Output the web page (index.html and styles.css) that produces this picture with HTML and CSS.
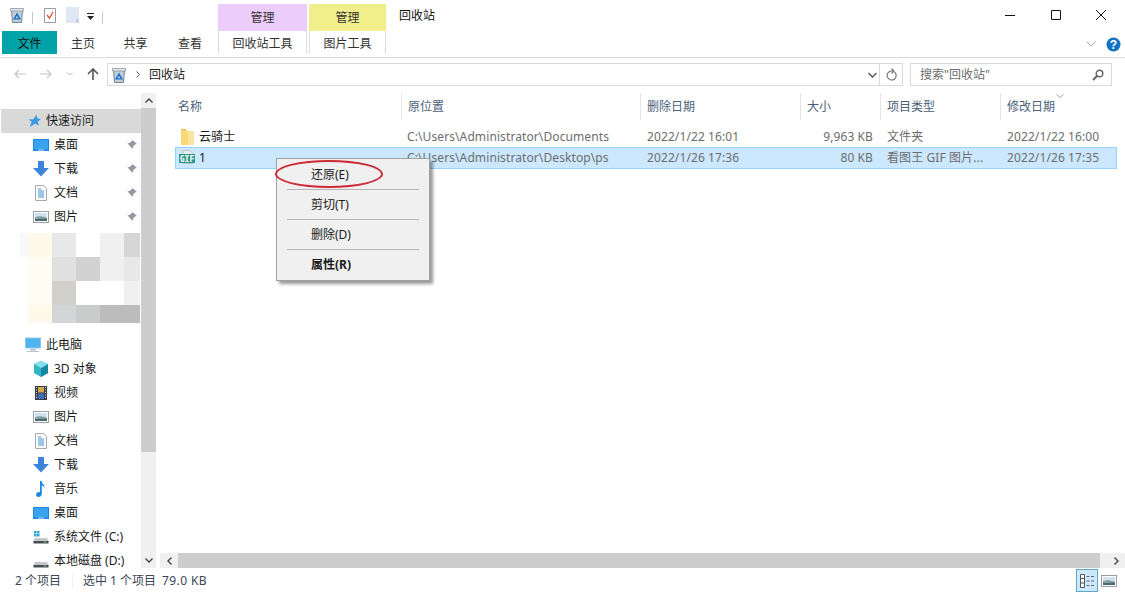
FILE: index.html
```html
<!DOCTYPE html>
<html lang="zh-CN">
<head>
  <meta charset="UTF-8">
  <title>回收站</title>
  <link rel="stylesheet" href="styles.css">
</head>
<body>
  <svg class="defs" width="0" height="0">
    <symbol id="bin" viewBox="0 0 16 16">
      <path d="M2.500 3h11l-1 12.500h-9z" fill="#c3ced9" stroke="#76828f"/>
      <path d="M1.500 1.500h13V4h-13z" fill="#e4e9ef" stroke="#8a95a2" stroke-width=".8"/>
      <path fill-rule="evenodd" d="M8 5.500l4 7H4zM8 8.700l-1.600 2.600h3.200z" fill="#1573cc"/>
    </symbol>
    <symbol id="desk" viewBox="0 0 16 16">
      <rect x="0" y="2" width="16" height="12" fill="#1a86de"/>
      <rect x="1" y="3" width="14" height="9.500" fill="#38a4f0"/>
      <rect x="5" y="12.500" width="6" height="1" fill="#bfe3fb"/>
    </symbol>
    <symbol id="down" viewBox="0 0 16 16">
      <path d="M5 0h6v7h5l-8 8.500L0 7h5z" fill="#3c86d8"/>
    </symbol>
    <symbol id="doc" viewBox="0 0 16 16">
      <path d="M2.500 .5h8l3 3v12h-11z" fill="#fff" stroke="#a3a9b0"/>
      <path d="M5 4h3M5 6h6M5 8h6M5 10h6M5 12h6" stroke="#3d8fd1" fill="none"/>
    </symbol>
    <symbol id="pic" viewBox="0 0 16 16">
      <rect x="0.500" y="2.500" width="15" height="11" fill="#fff" stroke="#9a9fa5"/>
      <rect x="2" y="4" width="12" height="4" fill="#cfe0ee"/>
      <path d="M2 8l5-1 7 1.500V12H2z" fill="#8aa3a8"/>
      <path d="M2 10l12-.5V12H2z" fill="#4a6a72"/>
    </symbol>
    <symbol id="pin" viewBox="0 0 12 12">
      <path d="M6.500 1l4.500 4-2 .6-2 2.200-.2 2.200L4 7.300 1 11l3-4-2.700-2.800L3.600 4l2.200-1.800z" fill="#8f979f"/>
    </symbol>
  </svg>

  <header class="titlebar">
    <div class="qat">
      <svg class="icon" width="16" height="16"><use href="#bin"/></svg>
      <span class="qat-sep"></span>
      <svg class="icon" width="16" height="17" viewBox="0 0 16 17"><path d="M2.500 1.500h11v14h-11z" fill="#fff" stroke="#9a9a9a"/><path d="M5 8l2.500 3L11 5" stroke="#e2542a" stroke-width="1.300" fill="none"/></svg>
      <svg class="icon qat-page" width="14" height="16" viewBox="0 0 14 16"><path d="M0 0h13v16H0z" fill="#dfe7f3"/><path d="M10 12h3v4h-3z" fill="#c3cddb"/></svg>
      <svg class="icon qat-drop" width="7" height="8" viewBox="0 0 7 8"><path d="M0 0h7v1H0zM0 3h7L3.500 7z" fill="#222"/></svg>
      <span class="qat-sep last"></span>
    </div>
    <div class="ctx-head purple">管理</div>
    <div class="ctx-head yellow">管理</div>
    <div class="win-title">回收站</div>
    <div class="win-btns">
      <svg width="10" height="10" viewBox="0 0 10 10"><path d="M0 5.500h10" stroke="#111"/></svg>
      <svg width="10" height="10" viewBox="0 0 10 10"><path d="M.5.500h9v9h-9z" fill="none" stroke="#111"/></svg>
      <svg width="10" height="10" viewBox="0 0 10 10"><path d="M0 0l10 10M10 0L0 10" stroke="#111"/></svg>
    </div>
  </header>

  <div class="ribbon">
    <div class="tab file">文件</div>
    <div class="tab home">主页</div>
    <div class="tab share">共享</div>
    <div class="tab view">查看</div>
    <div class="tab tool t-bin">回收站工具</div>
    <div class="tab tool t-pic">图片工具</div>
    <div class="ribbon-right">
      <svg width="10" height="6" viewBox="0 0 10 6"><path d="M.5.500L5 5 9.500.500" fill="none" stroke="#a9a9a9"/></svg>
      <svg class="help" width="15" height="15" viewBox="0 0 15 15"><circle cx="7.500" cy="7.500" r="7" fill="#1573c4"/><text x="7.500" y="11.500" text-anchor="middle" class="help-q">?</text></svg>
    </div>
  </div>

  <div class="addr-row">
    <div class="nav-btns">
      <svg width="12" height="10" viewBox="0 0 12 10"><path d="M12 5H1M5 1L1 5l4 4" fill="none" stroke="#c4c4c4" stroke-width="1.200"/></svg>
      <svg width="12" height="10" viewBox="0 0 12 10"><path d="M0 5h11M7 1l4 4-4 4" fill="none" stroke="#c4c4c4" stroke-width="1.200"/></svg>
      <svg width="6" height="4" viewBox="0 0 6 4"><path d="M.5.500L3 3 5.500.500" fill="none" stroke="#c4c4c4"/></svg>
      <svg width="12" height="12" viewBox="0 0 12 12"><path d="M6 12V1.500M1 6l5-5 5 5" fill="none" stroke="#555" stroke-width="1.600"/></svg>
    </div>
    <div class="addr-box">
      <svg class="icon" width="16" height="16"><use href="#bin"/></svg>
      <svg class="crumb" width="4" height="7" viewBox="0 0 4 7"><path d="M.5.500l3 3-3 3" fill="none" stroke="#555"/></svg>
      <span class="crumb-text">回收站</span>
      <svg class="addr-drop" width="9" height="6" viewBox="0 0 9 6"><path d="M.5 1L4.500 5l4-4" fill="none" stroke="#555" stroke-width="1.400"/></svg>
      <span class="refresh">
        <svg width="11" height="13" viewBox="0 0 11 13"><path d="M8.500 4A4.500 4.500 0 1 1 5.500 3H7M5.500.500L8 3 5.500 5.500" fill="none" stroke="#777" stroke-width="1.200"/></svg>
      </span>
    </div>
    <div class="search-box">
      <span>搜索"回收站"</span>
      <svg width="12" height="12" viewBox="0 0 12 12"><circle cx="7.500" cy="4.500" r="3.300" fill="none" stroke="#666" stroke-width="1.400"/><path d="M5 7l-4 4" stroke="#666" stroke-width="2"/></svg>
    </div>
  </div>

  <div class="main">
    <aside class="sidebar">
      <div class="nav-tree">
        <div class="nav-item top active">
          <svg class="star" width="13" height="14" viewBox="0 0 14 14"><path d="M9 0l1 4.300 4 .5-3.400 2.700.9 5L8 9.600 2 13.500l2-6L.5 5.500 6 5z" fill="#3a98e0"/></svg>
          <span>快速访问</span>
        </div>
        <div class="nav-item"><svg width="16" height="16"><use href="#desk"/></svg><span>桌面</span><svg class="pin" width="12" height="12"><use href="#pin"/></svg></div>
        <div class="nav-item"><svg width="16" height="16"><use href="#down"/></svg><span>下载</span><svg class="pin" width="12" height="12"><use href="#pin"/></svg></div>
        <div class="nav-item"><svg width="16" height="16"><use href="#doc"/></svg><span>文档</span><svg class="pin" width="12" height="12"><use href="#pin"/></svg></div>
        <div class="nav-item"><svg width="16" height="16"><use href="#pic"/></svg><span>图片</span><svg class="pin" width="12" height="12"><use href="#pin"/></svg></div>

        <div class="blur-block">
          <i class="b1"></i><i class="b2"></i><i class="b3"></i><i class="b0"></i><i class="b4"></i><i class="b5"></i>
          <i class="b0"></i><i class="b2l"></i><i class="b6"></i><i class="b7"></i><i class="b4"></i><i class="b12"></i>
          <i class="b0"></i><i class="b2l"></i><i class="b8"></i><i class="b0"></i><i class="b0"></i><i class="b4"></i>
          <i class="b0"></i><i class="b2"></i><i class="b9"></i><i class="b10"></i><i class="b11"></i><i class="b11"></i>
        </div>

        <div class="nav-item top">
          <svg width="16" height="16" viewBox="0 0 16 16"><rect x="0.500" y="1" width="15" height="10" fill="#4db4ef" stroke="#8fc6e6"/><path d="M5 12h6v1.500H5zM2 14h12v1H2z" fill="#b6c3cd"/></svg>
          <span>此电脑</span>
        </div>
        <div class="nav-item">
          <svg width="16" height="16" viewBox="0 0 16 16"><path d="M8 0l7 3v9l-7 4-7-4V3z" fill="#2fb5c7"/><path d="M8 7l7-4v9l-7 4z" fill="#13889e"/><path d="M8 0l7 3-7 4-7-4z" fill="#83e0ea"/></svg>
          <span>3D 对象</span>
        </div>
        <div class="nav-item">
          <svg width="16" height="16" viewBox="0 0 16 16"><rect x="2" y="1" width="12" height="14" fill="#333c47"/><rect x="5" y="2" width="6" height="5.500" fill="#d4a94b"/><rect x="5" y="8.500" width="6" height="5.500" fill="#3d6fb8"/><path d="M3 2.500h1M3 5h1M3 7.500h1M3 10h1M3 12.500h1M12 2.500h1M12 5h1M12 7.500h1M12 10h1M12 12.500h1" stroke="#dde" fill="none"/></svg>
          <span>视频</span>
        </div>
        <div class="nav-item"><svg width="16" height="16"><use href="#pic"/></svg><span>图片</span></div>
        <div class="nav-item"><svg width="16" height="16"><use href="#doc"/></svg><span>文档</span></div>
        <div class="nav-item"><svg width="16" height="16"><use href="#down"/></svg><span>下载</span></div>
        <div class="nav-item">
          <svg width="16" height="16" viewBox="0 0 16 16"><path d="M7 0h1.500c.3 2.500 3.500 3.500 3 7-.6-1.500-1.500-2.300-2.700-2.500V13c0 1.800-1.700 3-3.500 3C4 16 3 15 3 13.800 3 12.300 4.500 11 6 11c.4 0 .7 0 1 .2z" fill="#1e88e5"/></svg>
          <span>音乐</span>
        </div>
        <div class="nav-item"><svg width="16" height="16"><use href="#desk"/></svg><span>桌面</span></div>
        <div class="nav-item">
          <svg width="16" height="16" viewBox="0 0 16 16"><path d="M1 2h2.500v2.500H1zM4 2h2.500v2.500H4zM1 5h2.500v2.500H1zM4 5h2.500v2.500H4z" fill="#2aa3d8"/><path d="M2 9h12l1.500 3v2H.500v-2z" fill="#c4c8cc"/><path d="M.5 12h15v2.500H.5z" fill="#4a4f54"/><path d="M11 13h2" stroke="#5fd35f"/></svg>
          <span>系统文件 (C:)</span>
        </div>
        <div class="nav-item">
          <svg width="16" height="16" viewBox="0 0 16 16"><path d="M2 9h12l1.500 3v2H.500v-2z" fill="#c4c8cc"/><path d="M.5 12h15v2.500H.5z" fill="#4a4f54"/><path d="M11 13h2" stroke="#5fd35f"/></svg>
          <span>本地磁盘 (D:)</span>
        </div>
      </div>
      <div class="vscroll">
        <div class="scroll-btn"><svg width="8" height="5" viewBox="0 0 8 5"><path d="M.5 4.500L4 1l3.500 3.500" fill="none" stroke="#444" stroke-width="1.400"/></svg></div>
        <div class="vthumb"></div>
        <div class="scroll-btn end"><svg width="8" height="5" viewBox="0 0 8 5"><path d="M.5.500L4 4 7.500.500" fill="none" stroke="#444" stroke-width="1.400"/></svg></div>
      </div>
    </aside>

    <section class="content">
      <div class="files">
        <div class="list-head row-grid">
          <div>名称</div>
          <div>原位置</div>
          <div>删除日期</div>
          <div>大小</div>
          <div>项目类型</div>
          <div class="sorted">修改日期
            <svg class="sort-mark" width="8" height="4" viewBox="0 0 8 4"><path d="M.5.500L4 3.500 7.500.500" fill="none" stroke="#a0a7b0"/></svg>
          </div>
        </div>
        <div class="file-row row-grid">
          <div class="name">
            <svg width="16" height="16" viewBox="0 0 16 16"><path d="M0 0h5l1 2h7v14H0z" fill="#f8d775"/><path d="M7 2h6v14H7z" fill="#fbe49d"/><path d="M0 .5h5" stroke="#e0b84c"/></svg>
            <span>云骑士</span>
          </div>
          <div>C:\Users\Administrator\Documents</div>
          <div>2022/1/22 16:01</div>
          <div class="size">9,963 KB</div>
          <div>文件夹</div>
          <div>2022/1/22 16:00</div>
        </div>
        <div class="file-row row-grid selected">
          <div class="name">
            <svg class="gif-icon" width="16" height="15" viewBox="0 0 16 15"><path d="M4 .5h7l3 3v10H4z" fill="#e8eef0" stroke="#b9c3c7"/><rect x="0" y="4" width="16" height="9" fill="#2c9a86"/><text x="8" y="11.500" text-anchor="middle" class="gif-tag">GIF</text></svg>
            <span class="dark">1</span>
          </div>
          <div>C:\Users\Administrator\Desktop\ps</div>
          <div>2022/1/26 17:36</div>
          <div class="size">80 KB</div>
          <div>看图王 GIF 图片...</div>
          <div>2022/1/26 17:35</div>
        </div>
      </div>
      <div class="hscroll">
        <div class="scroll-btn"><svg width="5" height="8" viewBox="0 0 5 8"><path d="M4.500.500L1 4l3.500 3.500" fill="none" stroke="#444" stroke-width="1.400"/></svg></div>
        <div class="hthumb"></div>
        <div class="scroll-btn"><svg width="5" height="8" viewBox="0 0 5 8"><path d="M.5.500L4 4 .5 7.500" fill="none" stroke="#444" stroke-width="1.400"/></svg></div>
      </div>

      <div class="ctx-menu">
        <div class="menu-item">还原(E)</div>
        <div class="menu-sep"></div>
        <div class="menu-item">剪切(T)</div>
        <div class="menu-sep"></div>
        <div class="menu-item">删除(D)</div>
        <div class="menu-sep"></div>
        <div class="menu-item bold">属性(R)</div>
      </div>
      <div class="red-ring"></div>
    </section>
  </div>

  <footer class="status">
    <span class="count">2 个项目</span>
    <span class="status-sep"></span>
    <span>选中 1 个项目</span>
    <span class="status-size">79.0 KB</span>
    <div class="views">
      <span class="view-btn on">
        <svg width="16" height="16" viewBox="0 0 16 16"><path d="M1.500 1.500h4v13h-4zM1.500 5.500h4M1.500 10h4" fill="#fff" stroke="#555"/><path d="M7.500 3.500h3M12 3.500h3M7.500 8h3M12 8h3M7.500 12.500h3M12 12.500h3" stroke="#666"/></svg>
      </span>
      <span class="view-btn">
        <svg width="16" height="16"><use href="#pic"/></svg>
      </span>
    </div>
  </footer>
</body>
</html>
```

FILE: styles.css
```css
* {
  box-sizing: border-box;
}

html, body {
  margin: 0;
  height: 100%;
}

body {
  width: 1125px;
  height: 593px;
  overflow: hidden;
  display: flex;
  flex-direction: column;
  background: #fff;
  color: #1a1a1a;
  font-family: "Noto Sans", "Noto Sans CJK SC", sans-serif;
  font-size: 12px;
  line-height: 16px;
}

svg {
  display: block;
  flex-shrink: 0;
}

.defs {
  position: absolute;
}

/* title row */
.titlebar {
  height: 31px;
  padding-top: 4px;
  display: flex;
}

.qat {
  width: 218px;
  padding: 3px 0 0 9px;
  display: flex;
  align-items: flex-start;
}

.qat-sep {
  width: 1px;
  height: 12px;
  margin: 5px 9px 0 7px;
  background: #c8c8c8;
}

.qat-page {
  margin-left: 8px;
}

.qat-drop {
  margin: 6px 0 0 7px;
}

.qat-sep.last {
  margin-left: 8px;
}

.ctx-head {
  height: 27px;
  padding-top: 6px;
  text-align: center;
  color: #333;
}

.purple {
  width: 89px;
  background: #ecccfa;
}

.yellow {
  width: 77px;
  margin-left: 2px;
  background: #f1ef8b;
}

.win-title {
  margin-left: 13px;
  padding-top: 4px;
  color: #111;
}

.win-btns {
  margin-left: auto;
  width: 120px;
  padding: 6px 19px 0 0;
  display: flex;
  justify-content: space-between;
}

/* ribbon tabs */
.ribbon {
  height: 27px;
  padding-bottom: 3px;
  border-bottom: 1px solid #dadada;
  display: flex;
}

.tab {
  height: 23px;
  text-align: center;
  line-height: 25px;
  color: #333;
}

.file {
  width: 55px;
  margin-left: 2px;
  background: #00a4a8;
  color: #111;
}

.home { width: 52px; }
.share { width: 53px; }
.view { width: 56px; }

.tool {
  border-left: 1px solid #dcdcdc;
  border-right: 1px solid #dcdcdc;
}

.t-bin { width: 89px; }
.t-pic { width: 77px; margin-left: 2px; }

.ribbon-right {
  margin-left: auto;
  width: 40px;
  padding-right: 4px;
  display: flex;
  justify-content: space-between;
  align-items: center;
  height: 26px;
}

.ribbon-right > svg:first-child {
  margin-left: 1px;
}

.help-q {
  fill: #fff;
  font-size: 12px;
  font-weight: 700;
  font-family: "Liberation Sans", sans-serif;
}

/* address row */
.addr-row {
  height: 35px;
  padding-top: 5px;
  display: flex;
}

.nav-btns {
  width: 107px;
  height: 22px;
  padding: 0 8px 0 14px;
  display: flex;
  align-items: center;
  justify-content: space-between;
}

.addr-box {
  width: 796px;
  height: 23px;
  border: 1px solid #d9d9d9;
  padding-left: 3px;
  display: flex;
  align-items: center;
}

.crumb {
  margin: 0 9px 0 9px;
}

.crumb-text {
  color: #222;
}

.addr-drop {
  margin-left: auto;
  margin-right: 2px;
}

.refresh {
  width: 23px;
  height: 100%;
  border-left: 1px solid #d9d9d9;
  display: flex;
  align-items: center;
  justify-content: center;
}

.search-box {
  width: 202px;
  height: 23px;
  margin-left: 7px;
  padding: 0 7px 0 9px;
  border: 1px solid #d9d9d9;
  display: flex;
  align-items: center;
  justify-content: space-between;
  color: #6d6d6d;
}

/* sidebar + list */
.main {
  height: 475px;
  display: flex;
  overflow: hidden;
}

.sidebar {
  width: 160px;
  display: flex;
  flex-shrink: 0;
}

.nav-tree {
  width: 141px;
  padding: 16px 0 0 1px;
  overflow: hidden;
}

.nav-item {
  height: 24px;
  padding-left: 32px;
  display: flex;
  align-items: center;
  gap: 5px;
  white-space: nowrap;
}

.nav-item.top {
  padding-left: 24px;
}

.nav-item.top .star {
  margin-left: 3px;
}

.active {
  background: #d9d9d9;
}

.pin {
  margin-left: auto;
  margin-right: 3px;
}

.blur-block {
  height: 90px;
  margin: 4px 0 10px 19px;
  display: grid;
  grid-template-columns: 8px repeat(4, 24px) 16px;
  grid-template-rows: 24px 24px 24px 18px;
}

.b0 { background: #fff; }
.b1 { background: #f7f9fc; }
.b2 { background: #fff9ec; }
.b2l { background: #fffcf3; }
.b3 { background: #e8e8e8; }
.b4 { background: #f0f0f0; }
.b5 { background: #d6d6d6; }
.b6 { background: #e0e0e0; }
.b7 { background: #d2d2d2; }
.b8 { background: #d0cfcb; }
.b9 { background: #d4d5d6; }
.b10 { background: #cacccc; }
.b11 { background: #bcbcbc; }
.b12 { background: #e8e8e8; }

.vscroll {
  width: 15px;
  display: flex;
  flex-direction: column;
  background: #f0f0f0;
}

.scroll-btn {
  width: 15px;
  height: 15px;
  flex-shrink: 0;
  display: flex;
  align-items: center;
  justify-content: center;
  background: #f0f0f0;
}

.vscroll .end {
  margin-top: auto;
}

.vthumb {
  height: 344px;
  background: #cdcdcd;
}

.content {
  position: relative;
  flex: 1;
  display: flex;
  flex-direction: column;
}

.files {
  flex: 1;
  padding-left: 15px;
  width: 957px;
}

.row-grid {
  display: grid;
  grid-template-columns: 227px 239px 160px 80px 120px 116px;
}

.list-head {
  height: 27px;
  color: #4c607a;
  margin-bottom: 6px;
}

.list-head > div {
  padding: 6px 0 0 6px;
  border-right: 1px solid #e5e5e5;
  white-space: nowrap;
}

.list-head > div:first-child {
  padding-left: 3px;
}

.list-head > div:last-child {
  border-right: 0;
  position: relative;
}

.sort-mark {
  position: absolute;
  left: 55px;
  top: 1px;
}

.file-row {
  height: 21px;
  color: #6d6d6d;
  align-items: center;
  border: 1px solid transparent;
  letter-spacing: 0.1px;
}

.file-row > div {
  padding-left: 5px;
  white-space: nowrap;
  overflow: hidden;
}

.file-row > div:nth-child(2) {
  padding-left: 4px;
}

.file-row .name {
  padding-left: 5px;
  display: flex;
  align-items: center;
  gap: 2px;
  color: #1a1a1a;
}

.file-row > .size {
  padding: 0 9px 0 0;
  text-align: right;
}

.selected {
  height: 22px;
  padding-bottom: 1px;
  background: #cce8ff;
  border-color: #99d1ff;
}

.gif-icon {
  margin-left: -2px;
  margin-right: 2px;
}

.gif-tag {
  fill: #fff;
  font-size: 8px;
  font-weight: 700;
  font-family: "DejaVu Sans Mono", monospace;
}

.hscroll {
  height: 15px;
  display: flex;
  background: #f0f0f0;
  padding-right: 1px;
}

.hscroll .scroll-btn {
  width: 18px;
}

.hscroll .scroll-btn:last-child {
  width: 24px;
  padding-left: 8px;
}

.hthumb {
  width: 922px;
  background: #cdcdcd;
}

/* right-click menu and the red mark */
.ctx-menu {
  position: absolute;
  left: 116px;
  top: 65px;
  width: 154px;
  height: 123px;
  padding: 1px 10px 0;
  background: #f0f0f0;
  border: 1px solid #a0a0a0;
  box-shadow: 3px 3px 3px rgba(0, 0, 0, 0.4);
  color: #1a1a1a;
}

.menu-item {
  height: 29px;
  padding-left: 24px;
  line-height: 29px;
}

.menu-sep {
  height: 1px;
  background: #b5b5b5;
}

.bold {
  font-weight: 700;
}

.red-ring {
  position: absolute;
  left: 115px;
  top: 67px;
  width: 108px;
  height: 28px;
  border: 2px solid #cc2a36;
  border-radius: 50%;
}

/* status bar */
.status {
  height: 25px;
  padding: 0 1px 0 15px;
  display: flex;
  align-items: center;
  color: #3a4656;
}

.status-sep {
  width: 1px;
  height: 14px;
  margin: 0 10px 0 11px;
  background: #efefef;
}

.status-size {
  margin-left: 6px;
  letter-spacing: 0.4px;
}

.views {
  margin-left: auto;
  margin-right: 4px;
  display: flex;
}

.view-btn {
  width: 22px;
  height: 23px;
  display: flex;
  align-items: center;
  justify-content: center;
  border: 1px solid transparent;
}

.view-btn.on {
  background: #cce8ff;
  border-color: #5fa8c9;
}
```
